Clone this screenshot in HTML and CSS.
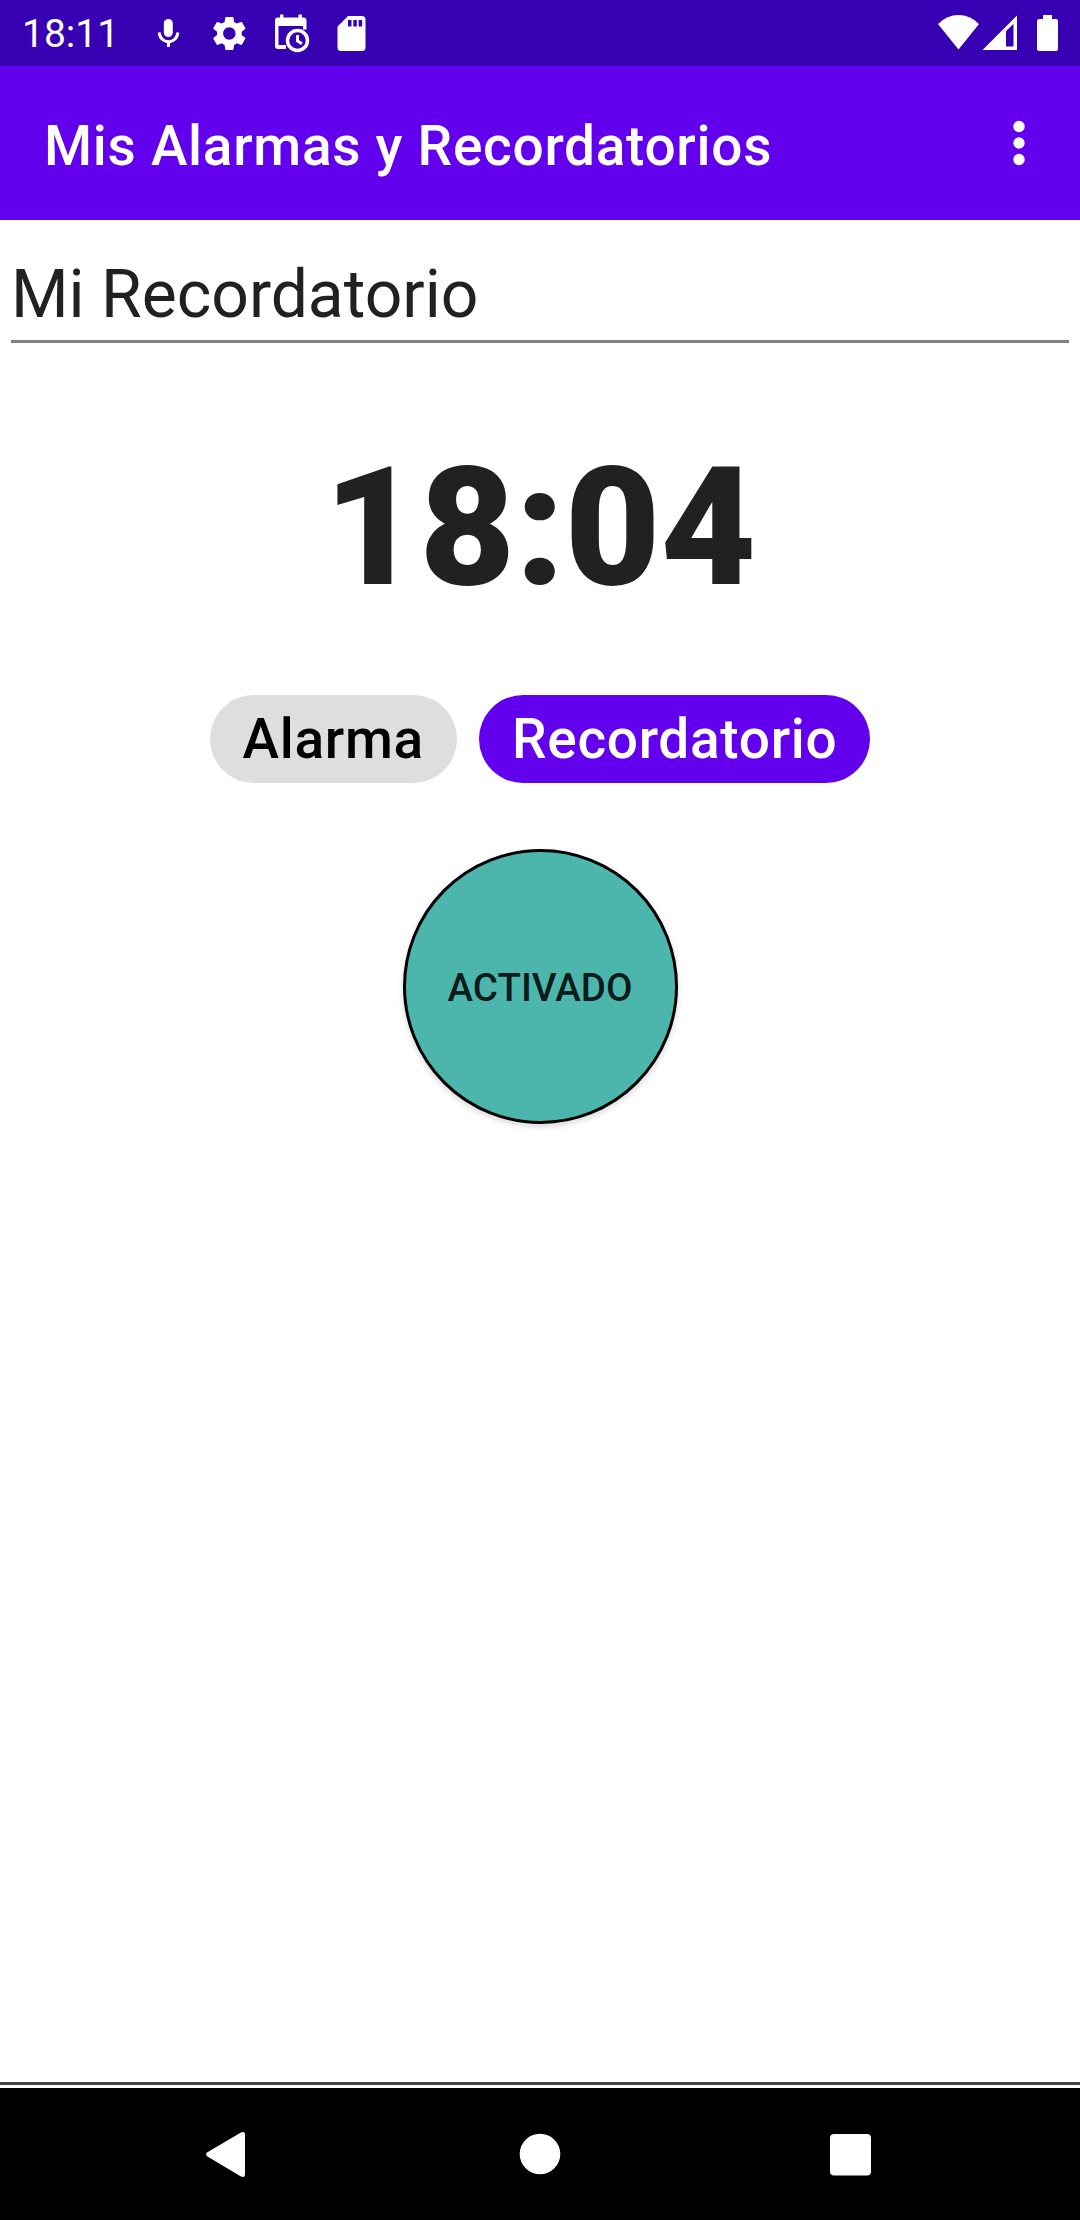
FILE: index.html
```html
<!DOCTYPE html>
<html lang="es">
<head>
  <meta charset="UTF-8" />
  <title>Mis Alarmas y Recordatorios</title>
  <link rel="stylesheet" href="styles.css">
</head>
<body>
  <div class="status-bar">
    <span class="status-time">18:11</span>
    <svg class="status-left" width="220" height="66" viewBox="150 0 220 66">
      <!-- mic -->
      <rect x="163.800" y="19" width="9" height="18" rx="4.500" />
      <path class="line" d="M159.300 32.500a9.200 9.200 0 0 0 18.400 0M168.500 41v6" />
      <!-- settings -->
      <path transform="translate(208.700 12.800) scale(1.720)" d="M19.140 12.940c.04-.3.060-.61.060-.94 0-.32-.02-.64-.07-.94l2.030-1.580c.18-.14.23-.41.120-.61l-1.920-3.320c-.12-.22-.37-.29-.59-.22l-2.390.96c-.5-.38-1.030-.7-1.620-.94l-.36-2.540c-.04-.24-.24-.41-.48-.41h-3.840c-.24 0-.43.170-.47.410l-.36 2.540c-.59.240-1.130.57-1.620.94l-2.390-.96c-.22-.08-.47 0-.59.220L2.740 8.870c-.12.210-.08.470.12.610l2.030 1.580c-.05.3-.09.630-.09.940s.02.640.070.940l-2.030 1.580c-.18.140-.23.410-.12.610l1.920 3.320c.12.220.370.290.590.220l2.390-.96c.5.380 1.030.7 1.620.94l.36 2.540c.05.240.24.410.48.410h3.840c.24 0 .44-.17.470-.41l.36-2.540c.59-.24 1.130-.56 1.620-.94l2.390.96c.22.080.47 0 .59-.22l1.920-3.320c.12-.22.070-.47-.12-.61l-2.010-1.580zM12 15.600c-1.980 0-3.600-1.620-3.600-3.600s1.620-3.600 3.600-3.600 3.600 1.620 3.600 3.600-1.620 3.600-3.600 3.600z" />
      <!-- calendar with clock -->
      <path d="M278 17.500h2v-3h3.500v3h15v-3h3.500v3h1.500q3 0 3 3V29.500h-3.500V26h-24.500v19H286v4h-8q-3 0-3-3V20.500q0-3 3-3z" />
      <circle class="clock" cx="297.500" cy="40.500" r="10" />
      <path class="line" d="M297.500 35v6l4.500 2.800" />
      <!-- sd card -->
      <path fill-rule="evenodd" d="M348 16h14q3.500 0 3.500 3.500v28q0 3.500-3.500 3.500h-21q-3.500 0-3.500-3.500V26.500zM348 20v6.500h3.500V20zM353.300 20v6.500h3.500V20zM358.600 20v6.500h3.500V20z" />
    </svg>
    <svg class="status-right" width="130" height="66" viewBox="930 0 130 66">
      <!-- wifi -->
      <path d="M958.500 49.500L938 24Q947 15 958.500 15T979 24z" />
      <!-- signal -->
      <path fill-rule="evenodd" d="M982.500 50L1017 15.500V50zM1006 31v15.500h7.500V24z" />
      <!-- battery -->
      <path d="M1043 15h9v4h4q2 0 2 2v28q0 2-2 2h-17q-2 0-2-2V21q0-2 2-2h4z" />
    </svg>
  </div>

  <header>
    <h1>Mis Alarmas y Recordatorios</h1>
    <svg width="12" height="46" viewBox="0 0 12 46">
      <circle cx="6" cy="6.500" r="5.700" />
      <circle cx="6" cy="23" r="5.700" />
      <circle cx="6" cy="39.500" r="5.700" />
    </svg>
  </header>

  <main>
    <input type="text" class="name" value="Mi Recordatorio" />
    <div class="time">18:04</div>
    <div class="chips">
      <span class="chip">Alarma</span>
      <span class="chip selected">Recordatorio</span>
    </div>
    <button class="toggle">ACTIVADO</button>
  </main>

  <nav>
    <svg width="1080" height="132" viewBox="0 0 1080 132">
      <path d="M207 64.500L240.500 44.800Q245 42.500 245 47V86Q245 90.500 240.500 88.200L207.500 68.500Q205 66.500 207 64.500z" />
      <circle cx="540" cy="66" r="20.300" />
      <rect x="830" y="46" width="41" height="41.500" rx="4" />
    </svg>
  </nav>
</body>
</html>
```
FILE: styles.css
```css
:root {
  --color-primary: #6200ee;
  --color-primary-dark: #3700b3;
  --color-text: #212121;
  --color-chip: #dedede;
  --color-on: #4db6ac;
}

* {
  box-sizing: border-box;
}

body {
  margin: 0;
  width: 1080px;
  height: 2220px;
  display: flex;
  flex-direction: column;
  font-family: Roboto, sans-serif;
  background: white;
  color: var(--color-text);
}

svg {
  display: block;
  fill: white;
}

.status-bar {
  display: flex;
  align-items: center;
  height: 66px;
  padding: 0 20px 0 22px;
  background: var(--color-primary-dark);
  color: white;
}

.status-time {
  width: 128px;
  font-size: 39px;
  line-height: 66px;
  padding-top: 2px;
}

.status-right {
  margin-left: auto;
}

.line {
  fill: none;
  stroke: white;
  stroke-width: 3;
}

.clock {
  fill: var(--color-primary-dark);
  stroke: white;
  stroke-width: 3.5;
}

header {
  display: flex;
  align-items: center;
  justify-content: space-between;
  height: 154px;
  padding: 0 55px 0 44px;
  background: var(--color-primary);
  color: white;
}

h1 {
  margin: 6px 0 0;
  font-size: 55px;
  font-weight: 500;
  letter-spacing: 0.7px;
}

main {
  flex: 1;
  display: flex;
  flex-direction: column;
  align-items: center;
  border-bottom: 3px solid #444;
  margin-bottom: 3px;
}

.name {
  width: 1058px;
  height: 101px;
  margin-top: 22px;
  padding: 6px 0 0;
  border: none;
  border-bottom: 3px solid #808080;
  outline: none;
  background: none;
  color: var(--color-text);
  font-family: inherit;
  font-size: 66px;
}

.time {
  margin-top: 88px;
  font-size: 165px;
  font-weight: 900;
  line-height: 193px;
}

.chips {
  display: flex;
  gap: 22px;
  margin-top: 71px;
}

.chip {
  height: 88px;
  padding: 0 33px;
  border-radius: 44px;
  background: var(--color-chip);
  color: black;
  font-size: 55px;
  font-weight: 500;
  line-height: 88px;
  letter-spacing: 0.7px;
}

.chip.selected {
  background: var(--color-primary);
  color: white;
}

.toggle {
  width: 275px;
  height: 275px;
  margin-top: 66px;
  padding: 2px 0 0;
  border: 3px solid black;
  border-radius: 50%;
  background: var(--color-on);
  box-shadow: 0 3px 6px rgb(0 0 0 / 0.15);
  color: rgb(0 0 0 / 0.87);
  font-family: inherit;
  font-size: 38.5px;
  font-weight: 500;
}

nav {
  height: 132px;
  background: black;
}
```
